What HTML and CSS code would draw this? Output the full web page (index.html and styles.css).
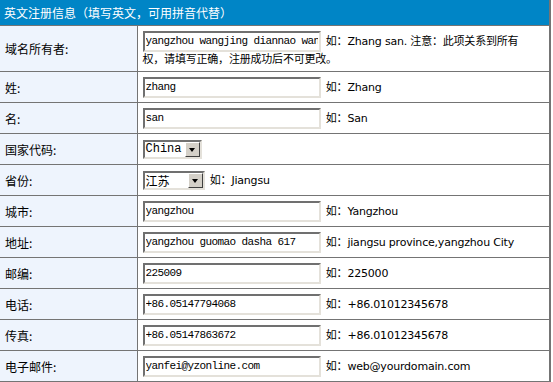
FILE: index.html
```html
<!DOCTYPE html>
<html lang="zh-CN">
<head>
  <meta charset="UTF-8">
  <title>英文注册信息</title>
  <link rel="stylesheet" href="styles.css">
</head>
<body>
  <table class="reg">
    <colgroup>
      <col class="col-label">
      <col class="col-field">
    </colgroup>
    <tr>
      <th colspan="2">英文注册信息（填写英文，可用拼音代替）</th>
    </tr>
    <tr class="tall">
      <td class="label">域名所有者:</td>
      <td class="field"><input class="txt" type="text" value="yangzhou wangjing diannao wan"> 如：Zhang san. 注意：此项关系到所有<br>权，请填写正确，注册成功后不可更改。</td>
    </tr>
    <tr>
      <td class="label">姓:</td>
      <td class="field"><input class="txt" type="text" value="zhang"> 如：Zhang</td>
    </tr>
    <tr>
      <td class="label">名:</td>
      <td class="field"><input class="txt" type="text" value="san"> 如：San</td>
    </tr>
    <tr>
      <td class="label">国家代码:</td>
      <td class="field">
        <span class="sel sel-country"><span class="sel-val">China</span><span class="sel-btn"></span></span>
      </td>
    </tr>
    <tr>
      <td class="label">省份:</td>
      <td class="field">
        <span class="sel sel-prov"><span class="sel-val cn">江苏</span><span class="sel-btn"></span></span> 如：Jiangsu
      </td>
    </tr>
    <tr>
      <td class="label">城市:</td>
      <td class="field"><input class="txt" type="text" value="yangzhou"> 如：Yangzhou</td>
    </tr>
    <tr>
      <td class="label">地址:</td>
      <td class="field"><input class="txt" type="text" value="yangzhou guomao dasha 617"> 如：jiangsu province,yangzhou City</td>
    </tr>
    <tr>
      <td class="label">邮编:</td>
      <td class="field"><input class="txt" type="text" value="225009"> 如：225000</td>
    </tr>
    <tr>
      <td class="label">电话:</td>
      <td class="field"><input class="txt" type="text" value="+86.05147794068"> 如：+86.01012345678</td>
    </tr>
    <tr>
      <td class="label">传真:</td>
      <td class="field"><input class="txt" type="text" value="+86.05147863672"> 如：+86.01012345678</td>
    </tr>
    <tr>
      <td class="label">电子邮件:</td>
      <td class="field"><input class="txt" type="text" value="yanfei@yzonline.com"> 如：web@yourdomain.com</td>
    </tr>
  </table>
</body>
</html>
```

FILE: styles.css
```css
body {
  margin: 0;
  background: #fff;
  font-family: "DejaVu Sans", "Noto Sans CJK SC", sans-serif;
  font-size: 11px;
  color: #000;
}

.reg {
  width: 551px;
  border-collapse: collapse;
  border-right: 2px solid #747474;
  border-bottom: 2px solid #747474;
  table-layout: fixed;
}

.col-label {
  width: 137px;
}

.reg th {
  height: 25px;
  padding: 0 0 0 4px;
  background: #0085c6;
  color: #fff;
  font-family: "Noto Sans CJK SC", sans-serif;
  font-size: 12px;
  font-weight: normal;
  text-align: left;
  border-bottom: 1px solid #747474;
}

.reg td {
  height: 30px;
  padding: 0 5px;
  border-top: 1px solid #747474;
  line-height: 15px;
  vertical-align: middle;
  white-space: nowrap;
  overflow: hidden;
}

.reg tr.tall td {
  height: 45px;
}

.label {
  background: #eef4fd;
  border-right: 1px solid #747474;
  font-family: "Noto Sans CJK SC", sans-serif;
  font-size: 12px;
}

.field {
  background: #fff;
  letter-spacing: -0.2px;
}

.txt {
  box-sizing: border-box;
  width: 178px;
  height: 21px;
  margin: 0 2px 0 0;
  padding: 0 1px;
  border-style: solid;
  border-width: 2px;
  border-color: #707070 #e4e1da #e4e1da #707070;
  background: #fff;
  font-family: "Liberation Mono", monospace;
  font-size: 11px;
  letter-spacing: -0.6px;
  color: #000;
  vertical-align: middle;
}

.sel {
  display: inline-flex;
  box-sizing: border-box;
  height: 19px;
  border-style: solid;
  border-width: 2px;
  border-color: #707070 #e4e1da #e4e1da #707070;
  background: #fff;
  vertical-align: middle;
  margin-right: 2px;
  letter-spacing: 0;
}

.sel-country {
  width: 59px;
}

.sel-prov {
  width: 62px;
}

.sel-val {
  flex: 1;
  padding-left: 1px;
  font-family: "Liberation Mono", monospace;
  font-size: 12px;
  line-height: 15px;
}

.sel-val.cn {
  font-family: "Noto Sans CJK SC", sans-serif;
}

.sel-btn {
  position: relative;
  box-sizing: border-box;
  width: 15px;
  height: 15px;
  background: #d4d0c8;
  border-style: solid;
  border-width: 1px;
  border-color: #fff #404040 #404040 #fff;
}

.sel-btn::after {
  content: "";
  position: absolute;
  left: 3px;
  top: 5px;
  border-left: 3.5px solid transparent;
  border-right: 3.5px solid transparent;
  border-top: 4px solid #000;
}
```
